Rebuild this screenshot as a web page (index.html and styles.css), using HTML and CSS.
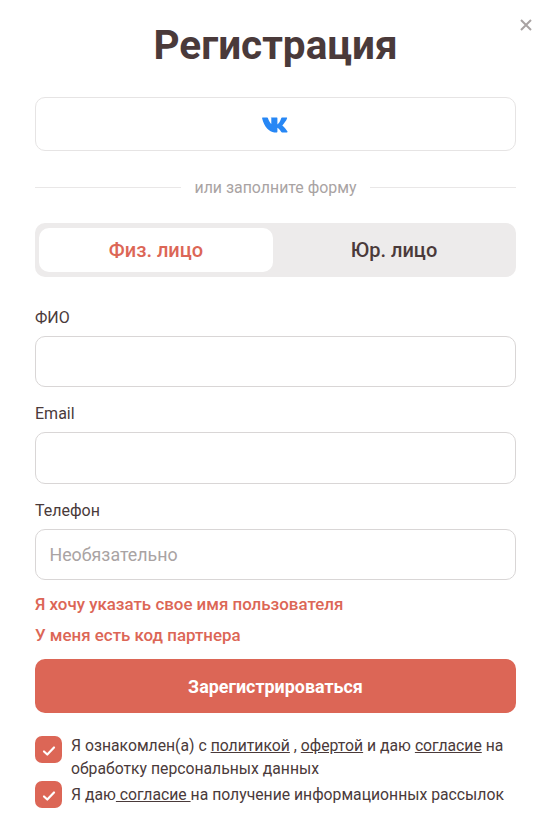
FILE: index.html
```html
<!DOCTYPE html>
<html lang="ru">
<head>
<meta charset="utf-8">
<title>Регистрация</title>
<link rel="stylesheet" href="styles.css">
</head>
<body>
<main class="modal">
  <button class="close" aria-label="Закрыть"><svg width="12" height="12" viewBox="0 0 12 12"><path d="M1 1l10 10M11 1L1 11" stroke="#a9a3a3" stroke-width="2" fill="none"/></svg></button>
  <h1 class="title">Регистрация</h1>
  <a class="social" href="#" aria-label="ВКонтакте">
    <svg width="28" height="16" viewBox="0 0 28 16"><path fill="#2787f5" d="M0.6 0.6h4.6c.3 0 .6.2.7.5.9 2.6 2.1 5 3.4 6V1.3c0-.4-.1-.5-.7-.7h6.3c.4 0 .5.2.5.6v6.300c1.300-.8 2.900-3.100 3.900-6.400.1-.3.3-.5.7-.5h4.500c.6 0 .7.300.6.700-.7 2.400-3.300 5.500-4.800 7.100 1.800 1.500 4 3.800 5.200 6.200.2.500 0 .8-.5.8h-4.900c-.4 0-.6-.2-.8-.5-1-1.500-2.500-3.400-3.900-4.100v3.900c0 .4-.2.700-.7.700h-2.400C7.500 15.400 2 9.700.1 1.300 0 .9.200.6.600.6z"/></svg>
  </a>
  <div class="divider"><span>или заполните форму</span></div>
  <div class="tabs">
    <button class="tab tab-active">Физ. лицо</button>
    <button class="tab">Юр. лицо</button>
  </div>
  <form class="form">
    <label class="field"><span class="label">ФИО</span><input class="input" type="text"></label>
    <label class="field"><span class="label">Email</span><input class="input" type="text"></label>
    <label class="field"><span class="label">Телефон</span><input class="input" type="text" placeholder="Необязательно"></label>
    <a class="link link-first" href="#">Я хочу указать свое имя пользователя</a>
    <a class="link link-second" href="#">У меня есть код партнера</a>
    <button class="submit" type="button">Зарегистрироваться</button>
    <div class="agree agree-first">
      <span class="check"><svg width="14" height="12" viewBox="0 0 14 12"><path d="M2 6.500l3.300 3L12 2.500" stroke="#fff" stroke-width="2.200" fill="none" stroke-linecap="round" stroke-linejoin="round"/></svg></span>
      <p>Я ознакомлен(а) с <a href="#">политикой</a> , <a href="#">офертой</a> и даю <a href="#">согласие</a> на обработку персональных данных</p>
    </div>
    <div class="agree">
      <span class="check"><svg width="14" height="12" viewBox="0 0 14 12"><path d="M2 6.500l3.300 3L12 2.500" stroke="#fff" stroke-width="2.200" fill="none" stroke-linecap="round" stroke-linejoin="round"/></svg></span>
      <p>Я даю<a href="#"> согласие </a>на получение информационных рассылок</p>
    </div>
  </form>
</main>
</body>
</html>
```
FILE: styles.css
```css
* { box-sizing: border-box; }
html, body { margin: 0; padding: 0; background: #fff; }
body { font-family: Roboto, "Liberation Sans", sans-serif; color: #4a3a3a; height: 838px; overflow: hidden; }
.modal { position: relative; width: 550px; padding: 0 34px 0 35px; }
.close { position: absolute; top: 19px; right: 18px; border: 0; background: none; padding: 0; width: 12px; height: 12px; display: flex; }
.title { margin: 0; padding-top: 20px; height: 97px; font-size: 40.5px; line-height: 50px; font-weight: 700; text-align: center; color: #4a3a3a; }
.social { display: flex; align-items: center; justify-content: center; height: 54px; border: 1px solid #e6e4e4; border-radius: 10px; }
.social svg { margin-top: 1px; }
.divider { display: flex; align-items: center; gap: 13px; margin-top: 26px; height: 20px; font-size: 15.9px; color: #a9a3a3; }
.divider::before, .divider::after { content: ""; flex: 1; height: 1px; background: #e9e7e7; }
.tabs { display: flex; margin-top: 26px; height: 54px; padding: 5px 4px; background: #edebeb; border-radius: 10px; }
.tab { flex: 1; border: 0; background: none; border-radius: 10px; font: 500 20px Roboto, sans-serif; color: #4a3a3a; padding: 0 0 0 3px; }
.tab-active { flex: 0 0 234px; background: #fff; color: #dc6656; padding: 0; }
.form { display: block; }
.field { display: block; }
.label { display: block; font-size: 16px; line-height: 20px; padding-top: 31px; height: 59px; color: #4a3a3a; }
.field + .field .label { padding-top: 17px; height: 45px; }
.input { display: block; width: 100%; height: 51px; border: 1px solid #d9d6d6; border-radius: 10px; padding: 0 13.5px; font: 400 17.8px Roboto, sans-serif; color: #4a3a3a; background: #fff; outline: none; }
.field:nth-child(2) .input { height: 52px; }
.input::placeholder { color: #a9a3a3; opacity: 1; }
.link { display: block; font-size: 16.9px; line-height: 20px; font-weight: 500; color: #dc6656; text-decoration: none; }
.link-first { margin-top: 14px; }
.link-second { margin-top: 11px; }
.submit { display: block; width: 100%; height: 54px; margin-top: 14px; border: 0; border-radius: 10px; background: #dc6656; color: #fff; font: 700 17.9px Roboto, sans-serif; }
.agree { display: flex; gap: 9px; font-size: 15.75px; line-height: 23px; }
.agree + .agree { margin-top: 1px; }
.agree-first { margin-top: 23px; }
.agree p { margin: -2px 0 0; flex: 1; }
.agree + .agree p { margin-top: 0; padding-top: 2px; }
.agree a { color: inherit; text-decoration: underline; }
.check { flex: none; width: 27px; height: 27px; padding-top: 2px; border-radius: 7px; background: #dc6656; display: flex; align-items: center; justify-content: center; }
```
